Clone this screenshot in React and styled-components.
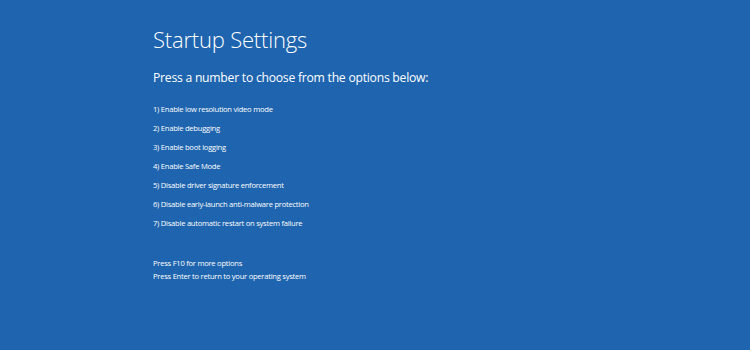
import styled, { createGlobalStyle } from 'styled-components'

const Global = createGlobalStyle`
  html, body {
    margin: 0;
    padding: 0;
    background: #1e64ae;
  }
`

const Screen = styled.div`
  width: 750px;
  height: 350px;
  box-sizing: border-box;
  background: #1e64ae;
  color: #ffffff;
  font-family: "Open Sans", "Noto Sans", sans-serif;
  padding: 24px 0 0 153px;
  display: flex;
  flex-direction: column;
`

const Title = styled.h1`
  margin: 0;
  font-size: 22px;
  font-weight: 300;
  line-height: 30px;
  letter-spacing: -0.2px;
`

const Subtitle = styled.div`
  margin-top: 15px;
  font-size: 12.2px;
  font-weight: 400;
  line-height: 18px;
  letter-spacing: -0.25px;
`

const Options = styled.ol`
  list-style: none;
  margin: 16px 0 0 0;
  padding: 0;
  display: flex;
  flex-direction: column;
  gap: 7px;
`

const Line = styled.li`
  font-size: 7.6px;
  line-height: 12px;
  letter-spacing: -0.25px;
`

const Footer = styled.div`
  margin-top: 28px;
  display: flex;
  flex-direction: column;
  gap: 1px;
`

const Hint = styled(Line).attrs({ as: 'div' })``

const options = [
  'Enable low resolution video mode',
  'Enable debugging',
  'Enable boot logging',
  'Enable Safe Mode',
  'Disable driver signature enforcement',
  'Disable early-launch anti-malware protection',
  'Disable automatic restart on system failure',
]

export default function App() {
  return (
    <>
      <Global />
      <Screen>
        <Title>Startup Settings</Title>
        <Subtitle>Press a number to choose from the options below:</Subtitle>
        <Options>
          {options.map((o, i) => (
            <Line key={i}>{i + 1}) {o}</Line>
          ))}
        </Options>
        <Footer>
          <Hint>Press F10 for more options</Hint>
          <Hint>Press Enter to return to your operating system</Hint>
        </Footer>
      </Screen>
    </>
  )
}
